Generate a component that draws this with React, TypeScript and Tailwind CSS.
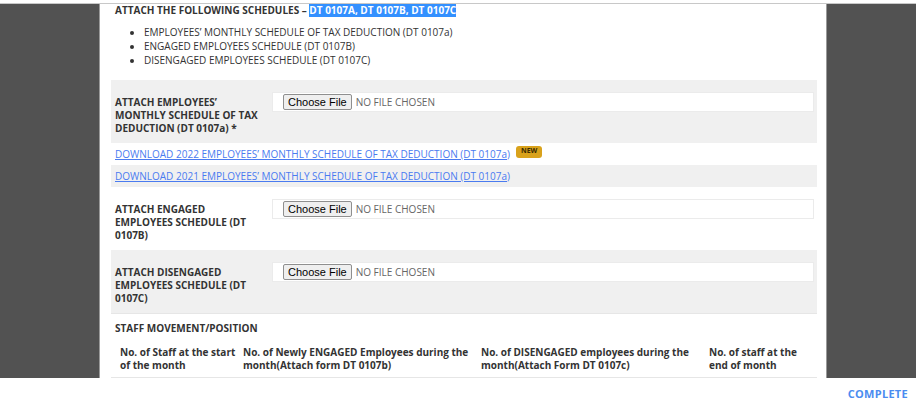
import { Fragment } from 'react'

const font = { fontFamily: '"Open Sans", "Noto Sans", sans-serif' }

function FileBox() {
  return (
    <div className="flex items-center h-[20px] bg-white border border-[#ebebeb] pl-[10px]">
      <span className="h-[16px] px-[4px] flex items-center bg-[#efefef] border border-[#8f8f8f] rounded-[2px] text-[11px] text-black leading-none font-['Liberation_Sans',sans-serif]">
        Choose File
      </span>
      <span className="ml-[4px] text-[10px] text-[#666]">NO FILE CHOSEN</span>
    </div>
  )
}

function AttachRow({ label, gray }: { label: string; gray?: boolean }) {
  return (
    <div className={`grid grid-cols-[157px_1fr] pl-[4px] pr-[3px] pt-[12px] pb-[8px] ${gray ? 'bg-[#f0f0f0]' : 'bg-white'}`}>
      <div className="pt-[4px] pr-[8px] text-[10px] font-bold leading-[13px] text-[#333]">{label}</div>
      <FileBox />
    </div>
  )
}

const headers = [
  'No. of Staff at the start of the month',
  'No. of Newly ENGAGED Employees during the month(Attach form DT 0107b)',
  'No. of DISENGAGED employees during the month(Attach Form DT 0107c)',
  'No. of staff at the end of month',
]

export default function App() {
  return (
    <div className="w-[916px] h-[409px] bg-white overflow-hidden" style={font}>
      <div className="flex h-[375px] mt-[3px] border-t border-[#c8c8c8]">
        <div className="w-[100px] bg-[#525252] border-r border-[#9a9a9a]" />
        <div className="w-[726px] bg-white pl-[11px] pr-[9px] overflow-hidden">
          {/* heading */}
          <div className="pl-[4px] text-[10px] font-bold leading-[12px] text-[#333]">
            ATTACH THE FOLLOWING SCHEDULES –{' '}
            <span className="bg-[#3390ff] text-white">DT 0107A, DT 0107B, DT 0107C</span>
          </div>
          <ul className="mt-[9px] pl-[33px] list-disc text-[10px] leading-[14px] text-[#333]">
            <li>EMPLOYEES’ MONTHLY SCHEDULE OF TAX DEDUCTION (DT 0107a)</li>
            <li>ENGAGED EMPLOYEES SCHEDULE (DT 0107B)</li>
            <li>DISENGAGED EMPLOYEES SCHEDULE (DT 0107C)</li>
          </ul>

          <div className="mt-[13px]">
            <AttachRow gray label="ATTACH EMPLOYEES’ MONTHLY SCHEDULE OF TAX DEDUCTION (DT 0107a) *" />
            <div className="h-[22px] flex items-center pl-[4px]">
              <a className="text-[10px] text-[#4a7bf0] underline">
                DOWNLOAD 2022 EMPLOYEES’ MONTHLY SCHEDULE OF TAX DEDUCTION (DT 0107a)
              </a>
              <span className="ml-[6px] -mt-[5px] px-[5px] h-[12px] flex items-center rounded-[3px] bg-[#d9a21b] text-[7px] font-bold text-[#3a2a00]">
                NEW
              </span>
            </div>
            <div className="h-[22px] flex items-center pl-[4px] bg-[#f0f0f0]">
              <a className="text-[10px] text-[#4a7bf0] underline">
                DOWNLOAD 2021 EMPLOYEES’ MONTHLY SCHEDULE OF TAX DEDUCTION (DT 0107a)
              </a>
            </div>
            <AttachRow label="ATTACH ENGAGED EMPLOYEES SCHEDULE (DT 0107B)" />
            <AttachRow gray label="ATTACH DISENGAGED EMPLOYEES SCHEDULE (DT 0107C)" />
          </div>

          <div className="border-t border-[#e6e6e6] pt-[8px] pl-[4px] text-[10px] font-bold leading-[13px] text-[#333]">
            STAFF MOVEMENT/POSITION
          </div>
          <div className="mt-[11px] grid grid-cols-[123px_238px_228px_1fr] pl-[9px] pb-[5px] border-b border-[#e6e6e6] text-[10px] font-bold leading-[13px] text-[#333]">
            {headers.map((h) => (
              <Fragment key={h}>
                <div className="pr-[6px] flex items-end">{h}</div>
              </Fragment>
            ))}
          </div>
        </div>
        <div className="flex-1 bg-[#525252] border-l border-[#9a9a9a]" />
      </div>
      <div className="flex justify-end pr-[8px] pt-[8px]">
        <span className="text-[11px] font-bold tracking-[0.3px] text-[#4a8cf0]">COMPLETE</span>
      </div>
    </div>
  )
}
